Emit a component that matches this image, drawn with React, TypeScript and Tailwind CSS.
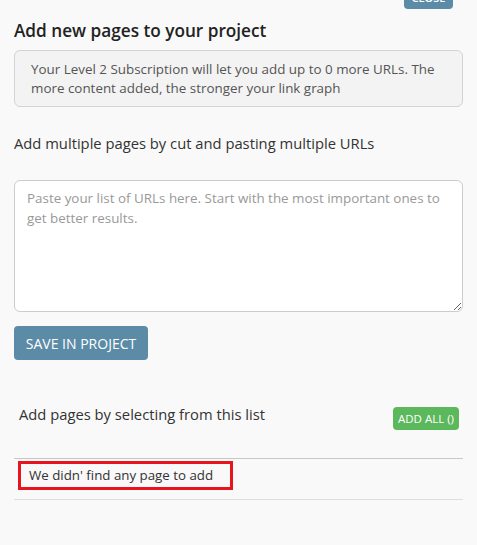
import React from "react";

export default function App() {
  return (
    <div
      className="relative h-[545px] w-[477px] overflow-hidden bg-[#f9f9f9] px-[14px] text-[#333]"
      style={{ fontFamily: '"Open Sans", "Liberation Sans", sans-serif' }}
    >
      {/* close button, mostly scrolled out of view */}
      <div className="flex justify-end pr-[10px]">
        <button
          type="button"
          className="-mt-[14px] h-[23px] w-[49px] rounded-[4px] bg-[#5b8ba6] text-[11px] font-semibold uppercase leading-[14px] text-white"
        >
          Close
        </button>
      </div>

      <h2 className="mt-[10px] text-[17.2px] font-semibold leading-[24px] text-[#222]">
        Add new pages to your project
      </h2>

      <div className="mt-[7px] rounded-[6px] border border-[#d3d3d3] bg-[#f3f3f3] pb-[8px] pl-[16px] pr-[10px] pt-[9px] text-[13.4px] leading-[19px] text-[#555]">
        Your Level 2 Subscription will let you add up to 0 more URLs. The more content added, the stronger your link graph
      </div>

      <p className="mt-[25px] text-[14.75px] leading-[22px] text-[#333]">
        Add multiple pages by cut and pasting multiple URLs
      </p>

      <textarea
        placeholder="Paste your list of URLs here. Start with the most important ones to get better results."
        className="mt-[26px] block h-[132px] w-full resize-y rounded-[6px] border border-[#ccc] bg-white px-[12px] py-[7px] text-[13.4px] leading-[20px] text-[#333] placeholder-[#999] outline-none"
      />

      <button
        type="button"
        className="mt-[14px] h-[34px] w-[134px] rounded-[4px] bg-[#5b8ba6] text-[14px] uppercase text-white"
      >
        Save in project
      </button>

      <div className="mt-[42px] flex items-start justify-between pl-[5px] pr-[4px]">
        <p className="mt-[1px] text-[14.75px] leading-[22px] text-[#333]">
          Add pages by selecting from this list
        </p>
        <button
          type="button"
          className="mt-[5px] h-[23px] rounded-[4px] bg-[#5cb85c] px-[5px] text-[11.5px] leading-[23px] text-white"
        >
          ADD ALL ()
        </button>
      </div>

      <div className="mt-[28px] border-t border-[#c8c8c8]">
        <div className="flex pb-[9px] pl-[4px] pt-[2px]">
          <div className="border-[3px] border-[#e8141e] py-[3px] pl-[8px] pr-[17px] text-[13.3px] leading-[17px] text-[#333]">
            We didn' find any page to add
          </div>
        </div>
      </div>
      <div className="border-t border-[#dedede]" />
    </div>
  );
}
